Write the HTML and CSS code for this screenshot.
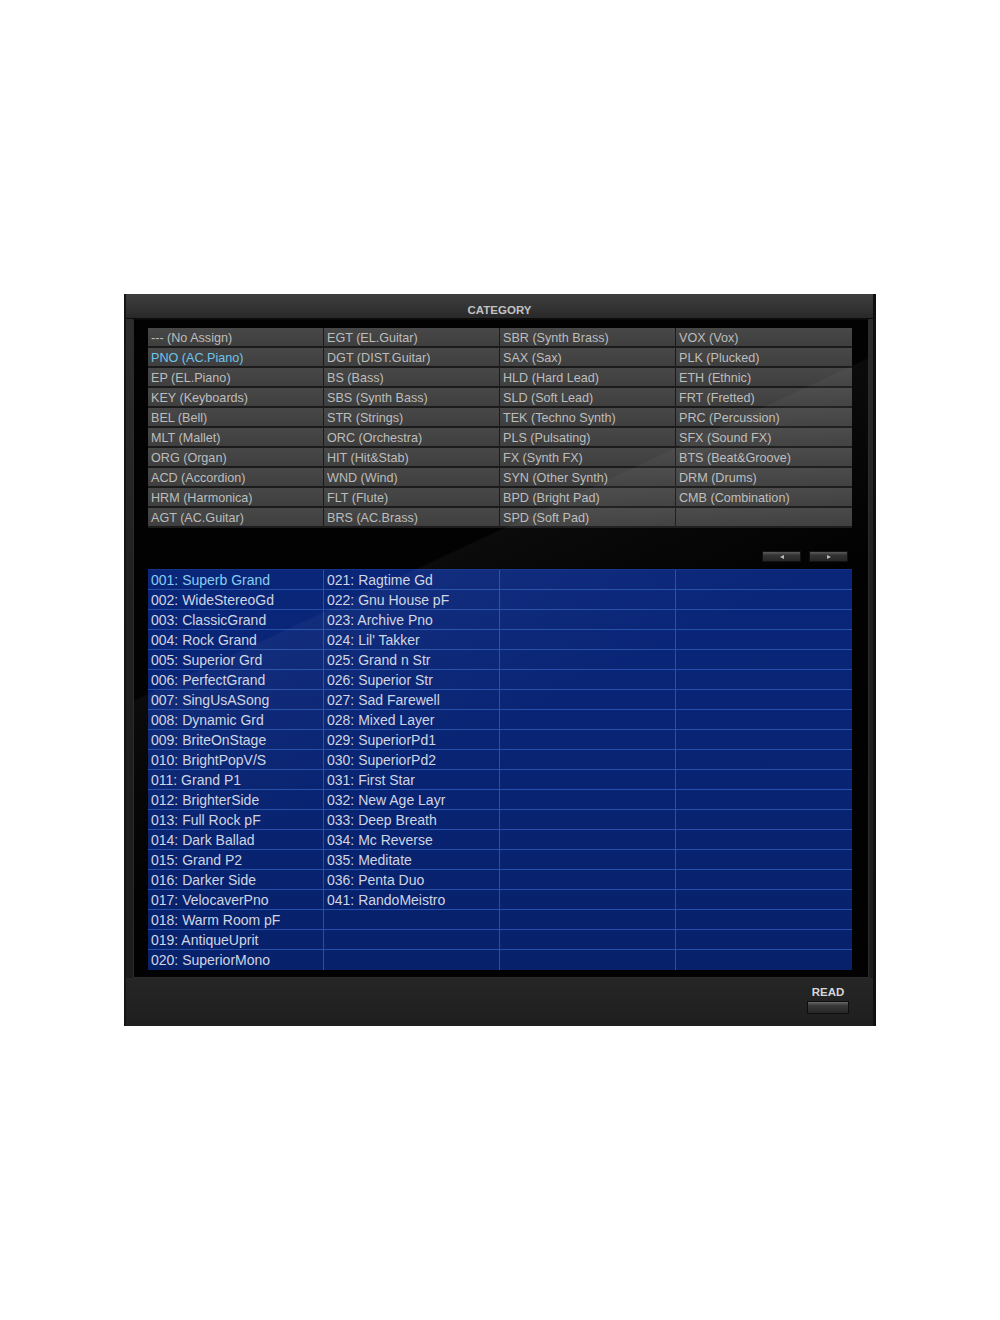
FILE: index.html
```html
<!DOCTYPE html>
<html>
<head>
<meta charset="utf-8">
<link rel="stylesheet" href="styles.css">
</head>
<body>
<div class="frame">
  <div class="titlebar">CATEGORY</div>
  <div class="panel">
    <div class="cats">
      <div class="cat">--- (No Assign)</div><div class="cat">EGT (EL.Guitar)</div><div class="cat">SBR (Synth Brass)</div><div class="cat">VOX (Vox)</div>
      <div class="cat sel">PNO (AC.Piano)</div><div class="cat">DGT (DIST.Guitar)</div><div class="cat">SAX (Sax)</div><div class="cat">PLK (Plucked)</div>
      <div class="cat">EP (EL.Piano)</div><div class="cat">BS (Bass)</div><div class="cat">HLD (Hard Lead)</div><div class="cat">ETH (Ethnic)</div>
      <div class="cat">KEY (Keyboards)</div><div class="cat">SBS (Synth Bass)</div><div class="cat">SLD (Soft Lead)</div><div class="cat">FRT (Fretted)</div>
      <div class="cat">BEL (Bell)</div><div class="cat">STR (Strings)</div><div class="cat">TEK (Techno Synth)</div><div class="cat">PRC (Percussion)</div>
      <div class="cat">MLT (Mallet)</div><div class="cat">ORC (Orchestra)</div><div class="cat">PLS (Pulsating)</div><div class="cat">SFX (Sound FX)</div>
      <div class="cat">ORG (Organ)</div><div class="cat">HIT (Hit&amp;Stab)</div><div class="cat">FX (Synth FX)</div><div class="cat">BTS (Beat&amp;Groove)</div>
      <div class="cat">ACD (Accordion)</div><div class="cat">WND (Wind)</div><div class="cat">SYN (Other Synth)</div><div class="cat">DRM (Drums)</div>
      <div class="cat">HRM (Harmonica)</div><div class="cat">FLT (Flute)</div><div class="cat">BPD (Bright Pad)</div><div class="cat">CMB (Combination)</div>
      <div class="cat">AGT (AC.Guitar)</div><div class="cat">BRS (AC.Brass)</div><div class="cat">SPD (Soft Pad)</div><div class="cat"></div>
    </div>
    <div class="pager">
      <div class="pbtn"><span class="tri-l"></span></div>
      <div class="pbtn"><span class="tri-r"></span></div>
    </div>
    <div class="list">
      <div class="it sel">001: Superb Grand</div><div class="it">021: Ragtime Gd</div><div class="it"></div><div class="it"></div>
      <div class="it">002: WideStereoGd</div><div class="it">022: Gnu House pF</div><div class="it"></div><div class="it"></div>
      <div class="it">003: ClassicGrand</div><div class="it">023: Archive Pno</div><div class="it"></div><div class="it"></div>
      <div class="it">004: Rock Grand</div><div class="it">024: Lil' Takker</div><div class="it"></div><div class="it"></div>
      <div class="it">005: Superior Grd</div><div class="it">025: Grand n Str</div><div class="it"></div><div class="it"></div>
      <div class="it">006: PerfectGrand</div><div class="it">026: Superior Str</div><div class="it"></div><div class="it"></div>
      <div class="it">007: SingUsASong</div><div class="it">027: Sad Farewell</div><div class="it"></div><div class="it"></div>
      <div class="it">008: Dynamic Grd</div><div class="it">028: Mixed Layer</div><div class="it"></div><div class="it"></div>
      <div class="it">009: BriteOnStage</div><div class="it">029: SuperiorPd1</div><div class="it"></div><div class="it"></div>
      <div class="it">010: BrightPopV/S</div><div class="it">030: SuperiorPd2</div><div class="it"></div><div class="it"></div>
      <div class="it">011: Grand P1</div><div class="it">031: First Star</div><div class="it"></div><div class="it"></div>
      <div class="it">012: BrighterSide</div><div class="it">032: New Age Layr</div><div class="it"></div><div class="it"></div>
      <div class="it">013: Full Rock pF</div><div class="it">033: Deep Breath</div><div class="it"></div><div class="it"></div>
      <div class="it">014: Dark Ballad</div><div class="it">034: Mc Reverse</div><div class="it"></div><div class="it"></div>
      <div class="it">015: Grand P2</div><div class="it">035: Meditate</div><div class="it"></div><div class="it"></div>
      <div class="it">016: Darker Side</div><div class="it">036: Penta Duo</div><div class="it"></div><div class="it"></div>
      <div class="it">017: VelocaverPno</div><div class="it">041: RandoMeistro</div><div class="it"></div><div class="it"></div>
      <div class="it">018: Warm Room pF</div><div class="it"></div><div class="it"></div><div class="it"></div>
      <div class="it">019: AntiqueUprit</div><div class="it"></div><div class="it"></div><div class="it"></div>
      <div class="it">020: SuperiorMono</div><div class="it"></div><div class="it"></div><div class="it"></div>
    </div>
    <div class="gloss"></div>
  </div>
  <div class="footer">
    <div class="read">
      <div class="read-label">READ</div>
      <div class="read-btn"></div>
    </div>
  </div>
</div>
</body>
</html>
```

FILE: styles.css
```css
html, body {
  margin: 0;
  padding: 0;
  background: #ffffff;
}
body {
  font-family: "Liberation Sans", Arial, sans-serif;
}
.frame {
  box-sizing: border-box;
  margin: 294px 0 0 124px;
  width: 752px;
  height: 732px;
  background: linear-gradient(to bottom, #2e2e2e 0%, #202020 40%, #1c1c1c 100%);
  border-right: 3px solid #101010;
  border-left: 2px solid #151515;
  display: flex;
  flex-direction: column;
}
.titlebar {
  height: 25px;
  flex: none;
  background: linear-gradient(to bottom, #3e3e3e 0%, #323232 60%, #282828 100%);
  border-bottom: 1px solid #0c0c0c;
  box-sizing: border-box;
  color: #c2c2c2;
  font-weight: bold;
  font-size: 11.5px;
  display: flex;
  align-items: center;
  justify-content: center;
  padding-top: 8px;
  padding-left: 0;
}
.panel {
  position: relative;
  flex: none;
  box-sizing: border-box;
  height: 659px;
  margin: 0 4px 0 7px;
  background: #020202;
  border: 1px solid #2c2c2c;
  border-top: 1px solid #0a0a0a;
  padding: 8px 16px 0 14px;
  display: flex;
  flex-direction: column;
  overflow: hidden;
}
.cats {
  display: grid;
  grid-template-columns: repeat(4, 176px);
  grid-auto-rows: 20px;
  background: #1a1a1a;
}
.cat {
  box-sizing: border-box;
  background: linear-gradient(to bottom, #484848 0%, #3f3f3f 100%);
  border-bottom: 2px solid #1b1b1b;
  border-right: 1px solid #1b1b1b;
  color: #bdbdbd;
  font-size: 12.6px;
  line-height: 20px;
  padding-left: 3px;
  white-space: nowrap;
}
.cat:nth-child(4n) {
  border-right: none;
}
.cat.sel {
  color: #6fc4ec;
}
.pager {
  height: 41px;
  display: flex;
  justify-content: flex-end;
  align-items: flex-start;
  gap: 8px;
  padding-top: 23px;
  padding-right: 4px;
  box-sizing: border-box;
}
.pbtn {
  box-sizing: border-box;
  width: 39px;
  height: 11px;
  background: linear-gradient(to bottom, #5a5a5a 0%, #333 35%, #252525 100%);
  border: 1px solid #111;
  display: flex;
  align-items: center;
  justify-content: center;
}
.tri-l {
  width: 0;
  height: 0;
  border-top: 2.5px solid transparent;
  border-bottom: 2.5px solid transparent;
  border-right: 4px solid #bbbbbb;
}
.tri-r {
  width: 0;
  height: 0;
  border-top: 2.5px solid transparent;
  border-bottom: 2.5px solid transparent;
  border-left: 4px solid #bbbbbb;
}
.list {
  display: grid;
  grid-template-columns: repeat(4, 176px);
  grid-auto-rows: 20px;
  background: linear-gradient(to bottom, #0a2679 0%, #07216b 100%);
  border-top: 1px solid #12348c;
}
.it {
  box-sizing: border-box;
  border-bottom: 1px solid #2650ab;
  border-right: 1px solid #2650ab;
  color: #d0d5e4;
  font-size: 14px;
  line-height: 20px;
  padding-left: 3px;
  white-space: nowrap;
}
.it:nth-child(4n) {
  border-right: none;
}
.it:nth-last-child(-n+4) {
  border-bottom: none;
}
.it.sel {
  color: #86cdf3;
}
.gloss {
  position: absolute;
  left: 0;
  top: 0;
  right: 0;
  bottom: 0;
  pointer-events: none;
  background: linear-gradient(155deg, rgba(255,255,255,0) 38%, rgba(255,255,255,0.035) 38.2%, rgba(255,255,255,0) 58%);
}
.footer {
  flex: 1;
  display: flex;
  justify-content: flex-end;
  padding: 7px 24px 0 0;
  background: linear-gradient(to bottom, #262626 0%, #1e1e1e 100%);
}
.read {
  display: flex;
  flex-direction: column;
  align-items: center;
  gap: 2px;
}
.read-label {
  color: #d6d6d6;
  font-weight: bold;
  font-size: 11.5px;
  line-height: 14px;
}
.read-btn {
  box-sizing: border-box;
  width: 42px;
  height: 13px;
  background: linear-gradient(to bottom, #6a6a6a 0%, #3a3a3a 30%, #262626 100%);
  border: 1px solid #0e0e0e;
}
```
